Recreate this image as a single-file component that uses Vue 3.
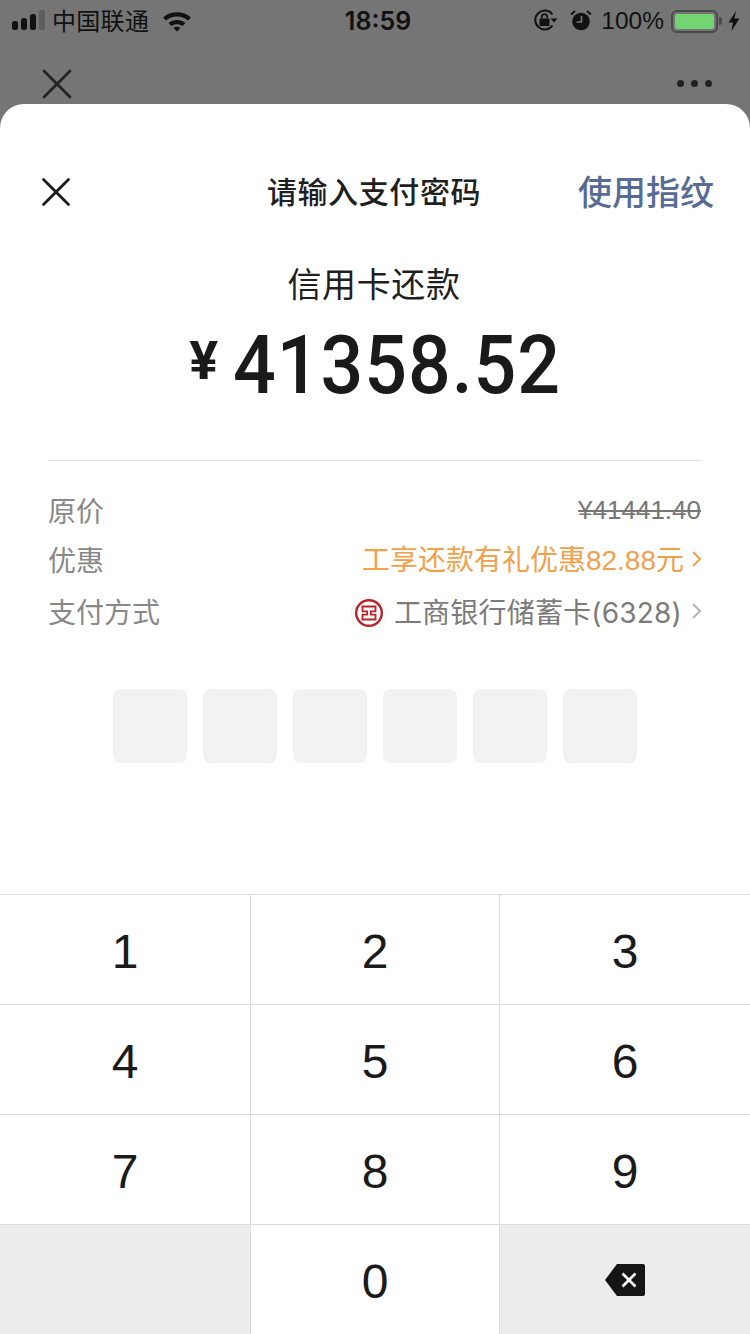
<template>
  <div class="page">
    <!-- status bar -->
    <div class="status">
      <div class="status-left">
        <svg class="signal" width="34" height="22" viewBox="0 0 34 22">
          <rect x="0" y="11" width="6" height="9" rx="2.500" fill="#111" />
          <rect x="9" y="8" width="6" height="12" rx="2.500" fill="#111" />
          <rect x="18" y="4" width="6" height="16" rx="2.500" fill="#111" />
          <rect x="27" y="0" width="6" height="20" rx="2.500" fill="#5c5c5c" />
        </svg>
        <span class="carrier">中国联通</span>
        <svg class="wifi" width="30" height="22" viewBox="0 0 30 22">
          <path d="M1 7.500 C8.500 .5 21.500 .5 29 7.500 L26 10.500 C20 5 10 5 4 10.500 Z" fill="#111" />
          <path d="M6.500 13 C11 9 19 9 23.500 13 L20.500 16 C17.500 13.500 12.500 13.500 9.500 16 Z" fill="#111" />
          <path d="M11.500 18 C13.500 16.300 16.500 16.300 18.500 18 L15 21.500 Z" fill="#111" />
        </svg>
      </div>
      <div class="time">18:59</div>
      <div class="status-right">
        <svg class="lock" width="24" height="24" viewBox="0 0 24 24">
          <path d="M18.500 6.500 A9.500 9.500 0 1 0 18.500 17.500" fill="none" stroke="#111" stroke-width="2" />
          <path d="M16.500 10.500 L23.500 10.500 L20 14.500 Z" fill="#111" />
          <rect x="5.500" y="10.500" width="10" height="7.500" rx="1" fill="#111" />
          <path d="M7.800 10.500 V8.800 A2.700 2.700 0 0 1 13.200 8.800 V10.500" fill="none" stroke="#111" stroke-width="1.700" />
        </svg>
        <svg class="alarm" width="22" height="22" viewBox="0 0 22 22">
          <circle cx="11" cy="11.500" r="8.800" fill="#111" />
          <path d="M11.500 6 V12 H6.500" fill="none" stroke="#757575" stroke-width="1.700" />
          <path d="M1 4.500 L5 1 M21 4.500 L17 1" stroke="#111" stroke-width="2" />
        </svg>
        <span class="percent">100%</span>
        <div class="battery">
          <div class="battery-fill"></div>
        </div>
        <div class="battery-tip"></div>
        <svg class="bolt" width="12" height="20" viewBox="0 0 12 20">
          <path d="M8 0 L0.500 11.500 H5 L3.500 20 L11.500 7.500 H6.500 Z" fill="#111" />
        </svg>
      </div>
    </div>

    <!-- page behind the sheet -->
    <div class="behind">
      <svg width="30" height="30" viewBox="0 0 30 30">
        <path d="M2 2 L28 28 M28 2 L2 28" stroke="#222" stroke-width="2.800" stroke-linecap="round" fill="none" />
      </svg>
      <div class="dots"><i></i><i></i><i></i></div>
    </div>

    <!-- pay sheet -->
    <div class="sheet">
      <div class="head">
        <svg class="close" width="30" height="30" viewBox="0 0 30 30">
          <path d="M2.500 2.500 L27.500 27.500 M27.500 2.500 L2.500 27.500" stroke="#1a1a1a" stroke-width="2.800" stroke-linecap="round" fill="none" />
        </svg>
        <div class="title">请输入支付密码</div>
        <div class="finger">使用指纹</div>
      </div>

      <div class="subject">信用卡还款</div>
      <div class="amount"><span class="yen">¥</span><span class="num">41358.52</span></div>

      <div class="details">
        <div class="row first">
          <span class="label">原价</span>
          <span class="origin">¥41441.40</span>
        </div>
        <div class="row second">
          <span class="label">优惠</span>
          <span class="promo">
            <span class="promo-text">工享还款有礼优惠82.88元</span>
            <svg width="10" height="16" viewBox="0 0 10 16"><path d="M1 1 L8 8 L1 15" fill="none" stroke="#f2a04a" stroke-width="2" /></svg>
          </span>
        </div>
        <div class="row third">
          <span class="label">支付方式</span>
          <span class="card">
            <svg class="bank" width="36" height="40" viewBox="0 0 36 40">
              <circle cx="18" cy="21" r="17.500" fill="#fff" stroke="#f3f3f3" />
              <circle cx="18" cy="20" r="12.800" fill="#fff" stroke="#b8232b" stroke-width="2.400" />
              <path d="M10.500 13.500 H25.500 M10.500 26.500 H25.500 M11.500 13.500 V18.300 H16.200 V21.700 H11.500 V26.500 M24.500 13.500 V18.300 H19.800 V21.700 H24.500 V26.500" fill="none" stroke="#b8232b" stroke-width="1.800" />
            </svg>
            <span class="card-text">工商银行储蓄卡(6328)</span>
            <svg width="10" height="16" viewBox="0 0 10 16"><path d="M1 1 L8 8 L1 15" fill="none" stroke="#b4b4b4" stroke-width="2" /></svg>
          </span>
        </div>
      </div>

      <div class="pins">
        <div v-for="n in 6" :key="n" class="pin"></div>
      </div>

      <div class="keyboard">
        <div v-for="key in keys" :key="key.id" :class="['key', { dark: key.dark }]">
          <span class="key-label">{{ key.label }}</span>
          <svg v-if="key.id === 'del'" width="40" height="32" viewBox="0 0 40 32">
            <path d="M12 0 H38 Q40 0 40 2 V30 Q40 32 38 32 H12 L0 16 Z" fill="#151515" />
            <path d="M17.500 9.500 L30.500 22.500 M30.500 9.500 L17.500 22.500" stroke="#fff" stroke-width="2.600" fill="none" />
          </svg>
        </div>
      </div>
    </div>
  </div>
</template>

<script setup>
const keys = [
  { id: '1', label: '1' },
  { id: '2', label: '2' },
  { id: '3', label: '3' },
  { id: '4', label: '4' },
  { id: '5', label: '5' },
  { id: '6', label: '6' },
  { id: '7', label: '7' },
  { id: '8', label: '8' },
  { id: '9', label: '9' },
  { id: 'empty', label: '', dark: true },
  { id: '0', label: '0' },
  { id: 'del', label: '', dark: true },
];
</script>

<style>
body {
  margin: 0;
}
</style>

<style scoped>
.page {
  width: 750px;
  height: 1334px;
  display: flex;
  flex-direction: column;
  background: #757575;
  overflow: hidden;
  font-family: "Liberation Sans", "Noto Sans CJK SC", sans-serif;
  color: #1a1a1a;
}

.status {
  height: 42px;
  flex: none;
  display: grid;
  grid-template-columns: 1fr auto 1fr;
  align-items: center;
  padding: 0 12px;
  color: #111;
  font-size: 26px;
}

.status-left {
  display: flex;
  align-items: center;
}

.signal {
  margin-right: 6px;
}

.carrier {
  font-size: 24px;
  letter-spacing: 0.3px;
  padding-bottom: 4px;
}

.wifi {
  margin-left: 13px;
}

.time {
  margin-left: 6px;
  font-family: Inter, sans-serif;
  font-weight: 600;
  font-size: 25px;
}

.status-right {
  display: flex;
  align-items: center;
  justify-content: flex-end;
  margin-right: -2px;
}

.lock {
  margin-bottom: 2px;
}

.alarm {
  margin-left: 12px;
}

.percent {
  margin-left: 9px;
  font-size: 24.500px;
}

.battery {
  margin-left: 7px;
  width: 47px;
  height: 23px;
  box-sizing: border-box;
  border: 2px solid #4a4a4a;
  border-radius: 6px;
  padding: 2px;
}

.battery-fill {
  height: 100%;
  background: #72d572;
  border-radius: 2px;
}

.battery-tip {
  width: 3px;
  height: 8px;
  margin-left: 1px;
  background: #4a4a4a;
  border-radius: 0 3px 3px 0;
}

.bolt {
  margin-left: 6px;
}

.behind {
  height: 62px;
  flex: none;
  display: flex;
  justify-content: space-between;
  align-items: flex-start;
  padding: 27px 38px 0 42px;
  box-sizing: border-box;
}

.dots {
  display: flex;
  gap: 7px;
  margin-top: 11px;
}

.dots i {
  width: 7px;
  height: 7px;
  border-radius: 50%;
  background: #222;
}

.sheet {
  flex: 1;
  display: flex;
  flex-direction: column;
  background: #fff;
  border-radius: 24px 24px 0 0;
}

.head {
  position: relative;
  display: flex;
  align-items: center;
  justify-content: space-between;
  margin-top: 65px;
  height: 46px;
  padding: 0 36px 0 41px;
}

.title {
  position: absolute;
  left: 0;
  right: 0;
  padding: 0 2px 4px 0;
  text-align: center;
  font-size: 30px;
  font-weight: 500;
  letter-spacing: 0.6px;
  color: #1f1f1f;
}

.finger {
  padding-bottom: 4px;
  font-size: 34px;
  font-weight: 500;
  color: #576b95;
}

.subject {
  margin-top: 45px;
  padding-right: 2px;
  text-align: center;
  font-size: 34px;
  letter-spacing: 0.6px;
  line-height: 50px;
  color: #1f1f1f;
}

.amount {
  display: flex;
  justify-content: center;
  align-items: flex-start;
  margin-top: 8px;
  height: 95px;
}

.yen {
  font-family: Roboto, sans-serif;
  font-weight: 700;
  font-size: 54px;
  line-height: 56px;
  margin-top: 15px;
  margin-right: 15px;
}

.num {
  font-family: Roboto, sans-serif;
  font-weight: 500;
  font-size: 81px;
  letter-spacing: 1px;
  line-height: 95px;
  margin-right: -25px;
  transform: scaleX(0.93);
  transform-origin: left center;
}

.details {
  margin: 47px 48px 0;
  border-top: 1px solid #e3e3e3;
  font-size: 28px;
  color: #888;
}

.row {
  display: flex;
  justify-content: space-between;
  align-items: center;
  height: 40px;
}

.first {
  margin-top: 29px;
}

.second {
  margin-top: 9px;
}

.third {
  margin-top: 12px;
}

.origin {
  margin-right: 1px;
  font-size: 26px;
  color: #777;
  text-decoration: line-through;
}

.promo {
  display: flex;
  align-items: center;
  gap: 8px;
  color: #f2a04a;
}

.promo-text {
  padding-bottom: 2px;
}

.card {
  display: flex;
  align-items: center;
  gap: 10px;
  font-family: Inter, "Noto Sans CJK SC", sans-serif;
  color: #7b7b7b;
}

.card-text {
  letter-spacing: 0.2px;
}

.bank {
  margin: 4px -3px 0 0;
}

.pins {
  display: flex;
  justify-content: center;
  gap: 16px;
  margin-top: 58px;
}

.pin {
  width: 74px;
  height: 74px;
  background: #f2f2f2;
  border-radius: 8px;
}

.keyboard {
  margin-top: auto;
  display: grid;
  grid-template-columns: 251px 249px 250px;
  grid-auto-rows: 110px;
}

.key {
  display: flex;
  align-items: center;
  justify-content: center;
  box-sizing: border-box;
  border-top: 1px solid #dcdcdc;
  border-right: 1px solid #dcdcdc;
  font-size: 48px;
  color: #1a1a1a;
}

.key:nth-child(3n) {
  border-right: none;
}

.key-label {
  padding-top: 4px;
}

.key-label:empty {
  display: none;
}

.key.dark {
  background: #ececec;
}
</style>
